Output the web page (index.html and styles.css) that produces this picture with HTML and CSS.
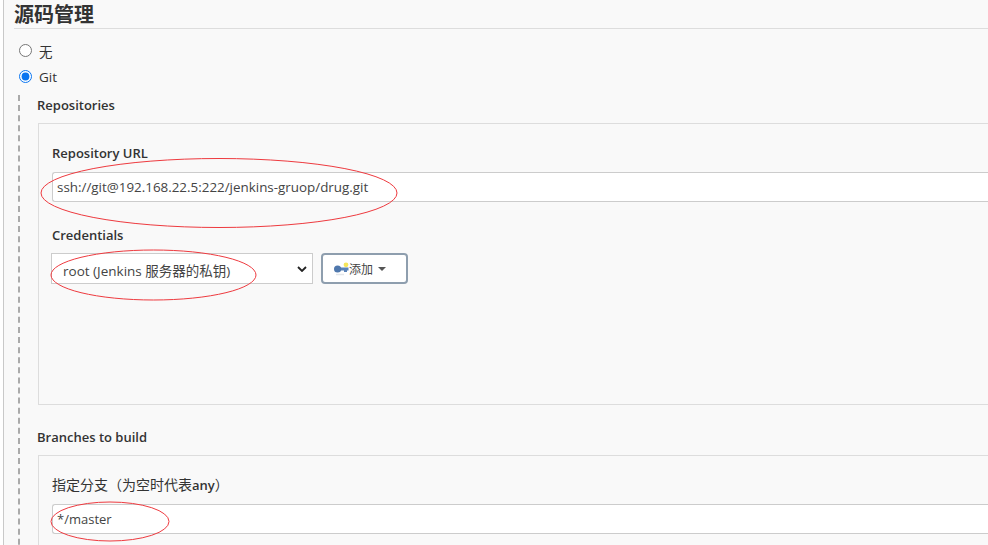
FILE: index.html
```html
<!DOCTYPE html>
<html lang="zh">
<head>
<meta charset="utf-8">
<title>源码管理</title>
<link rel="stylesheet" href="styles.css">
</head>
<body>
<main class="page">
  <h2 class="section-title">源码管理</h2>
  <div class="radio-row"><input type="radio" name="scm" class="radio" id="none"><label for="none">无</label></div>
  <div class="radio-row radio-git"><input type="radio" name="scm" class="radio" id="git" checked><label for="git">Git</label></div>
  <div class="git-block">
    <div class="group-title">Repositories</div>
    <div class="panel repo-panel">
      <label class="field-label">Repository URL</label>
      <input class="text-input" type="text" value="ssh://git@192.168.22.5:222/jenkins-gruop/drug.git">
      <label class="field-label cred-label">Credentials</label>
      <div class="cred-row">
        <div class="select-box"><span class="select-text">root (Jenkins 服务器的私钥)</span>
          <svg class="chevron" viewBox="0 0 10 6" width="10" height="6"><path d="M1 1l4 4 4-4" fill="none" stroke="#222" stroke-width="1.8"/></svg>
        </div>
        <button class="add-btn" type="button">
          <svg class="key" viewBox="0 0 15 14" width="15" height="14">
            <circle cx="12" cy="2.800" r="2.400" fill="#f6e65a"/>
            <rect x="4" y="5.500" width="10.500" height="3" fill="#5b83b8"/>
            <rect x="10" y="8" width="3" height="2" fill="#5b83b8"/>
            <circle cx="3.600" cy="7" r="3.600" fill="#4f78ad"/>
            <path d="M2 12.500h8" stroke="#e3e6ea" stroke-width="1.500"/>
          </svg><span>添加</span><i class="caret"></i>
        </button>
      </div>
    </div>
    <div class="group-title branches-title">Branches to build</div>
    <div class="panel branch-panel">
      <label class="field-label branch-label">指定分支（为空时代表<b class="any">any</b>）</label>
      <input class="text-input branch-input" type="text" value="*/master">
    </div>
  </div>
  <svg class="marks" width="988" height="545" viewBox="0 0 988 545">
    <ellipse cx="219" cy="193" rx="178" ry="34.500"/>
    <ellipse cx="153.500" cy="275" rx="102.500" ry="25"/>
    <ellipse cx="110" cy="521.500" rx="59" ry="19.500"/>
  </svg>
</main>
</body>
</html>
```
FILE: styles.css
```css
* { box-sizing: border-box; }
html, body { margin: 0; padding: 0; height: 100%; overflow: hidden; background: #fff; }
body {
  font-family: "Open Sans", "Noto Sans CJK SC", sans-serif;
  font-size: 13.5px;
  color: #333;
}
.page {
  position: relative;
  height: 545px;
  margin-left: 3px;
  padding-left: 10px;
  background: #f9f9f9;
  border-left: 1px solid #c9c9c9;
  overflow: hidden;
}
.section-title {
  margin: 0;
  height: 29px;
  font-size: 20px;
  line-height: 30px;
  font-weight: 700;
  color: #333;
  border-bottom: 1px solid #ddd;
}
.radio-row { display: flex; align-items: center; height: 26px; padding-left: 5px; }
.radio-row:first-of-type { margin-top: 8px; }
.radio { margin: 0 7px 0 0; width: 13px; height: 13px; accent-color: #0a75f0; }
.radio-row label { margin-top: 2px; }
.git-block {
  margin: 6px 0 0 4px;
  padding-left: 17px;
  border-left: 2px dashed #aaa;
}
.group-title { font-weight: 600; font-size: 13px; line-height: 18px; padding-top: 1px; }
.panel { border: 1px solid #ddd; border-right: 0; margin: 9px 0 0 1px; padding: 20px 0 0 13px; }
.repo-panel { height: 282px; }
.field-label { display: block; font-size: 13px; font-weight: 600; line-height: 18px; height: 28px; }
.text-input {
  display: block;
  width: 100%;
  height: 30px;
  padding: 0 4px;
  border: 1px solid #ccc;
  border-right: 0;
  border-radius: 3px 0 0 3px;
  background: #fff;
  color: #444;
  font: 13.4px "Open Sans", "Noto Sans CJK SC", sans-serif;
}
.branch-input { font-size: 13px; }
.cred-label { margin-top: 24px; height: 27px; }
.cred-row { display: flex; align-items: center; gap: 8px; margin-left: -1px; }
.select-box {
  display: flex;
  align-items: center;
  justify-content: space-between;
  width: 262px;
  height: 31px;
  padding: 0 5px 0 11px;
  background: #fff;
  border: 1px solid #ccc;
  color: #444;
}
.select-text { padding-top: 2px; }
.add-btn {
  display: flex;
  align-items: center;
  width: 87px;
  height: 31px;
  padding: 0 0 0 11px;
  background: #fff;
  border: 2px solid #8e9eae;
  border-radius: 4px;
  color: #444;
  font: 12px "Open Sans", "Noto Sans CJK SC", sans-serif;
}
.key { flex: none; }
.caret {
  margin-left: 5px;
  border-left: 4px solid transparent;
  border-right: 4px solid transparent;
  border-top: 4px solid #555;
}
.branches-title { margin-top: 22px; }
.branch-panel { height: 120px; }
.branch-label { font-size: 14px; font-weight: 400; }
.any { font-size: 13px; font-weight: 600; }
.marks { position: absolute; left: -4px; top: 0; pointer-events: none; }
.marks ellipse { fill: none; stroke: #ee3a3f; stroke-width: 1; }
```
